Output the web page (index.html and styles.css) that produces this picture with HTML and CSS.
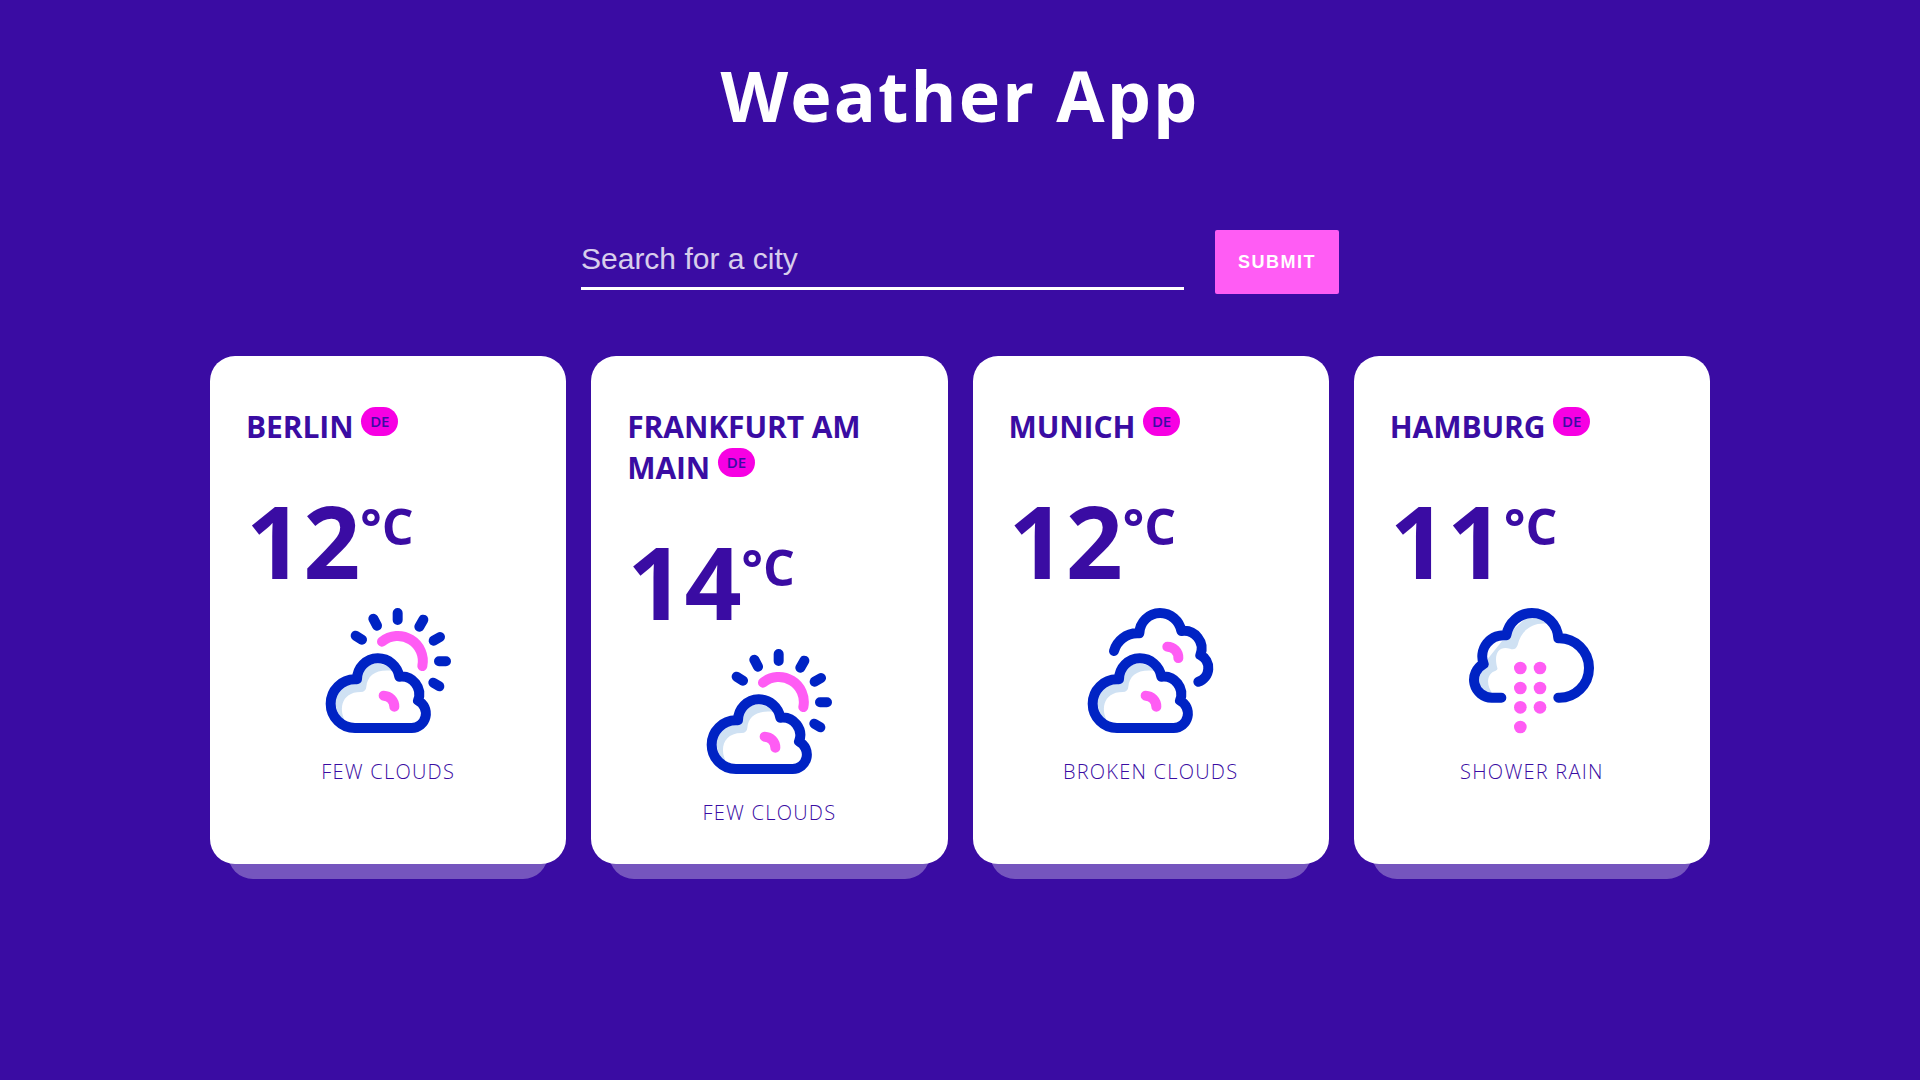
FILE: index.html
```html
<!DOCTYPE html>
<html lang="en">
<head>
<meta charset="utf-8">
<title>Weather App</title>
<link rel="stylesheet" href="styles.css">
</head>
<body>
<svg class="defs" width="0" height="0" aria-hidden="true">
  <symbol id="cloud" viewBox="48 54 375 375" overflow="visible">
    <path class="shade" d="M110 400C85 365 90 306 152 306Q168 305 169 290C172 255 200 236 250 243A64 64 0 0 0 140 268L135 268A73 73 0 0 0 110 400Z"/>
    <path class="line" d="M135 414A73 73 0 0 1 135 268L141 268A63 63 0 0 1 203 205A65 65 0 0 1 268 260A53 53 0 0 1 324 332A43.4 43.4 0 0 1 305 414Z"/>
    <path class="accent" d="M221 317A33 33 0 0 1 253 350"/>
  </symbol>
</svg>
<header class="banner">
  <h1 class="heading">Weather App</h1>
  <form class="search">
    <input class="search-input" type="text" placeholder="Search for a city">
    <button class="search-button" type="button">SUBMIT</button>
  </form>
</header>
<main class="cities">
  <section class="city">
    <h2 class="city-name">Berlin <sup class="country">DE</sup></h2>
    <div class="city-temp">12<sup class="unit">°C</sup></div>
    <figure class="weather">
      <svg class="icon" viewBox="48 54 375 375">
        <path class="accent" d="M216 155A75 75 0 0 1 337 228"/>
        <path class="line" d="M263 69V90M190 86L201 107M340 89L328 110M137 137L156 149M390 141L371 152M387 214H408M370 278L388 289"/>
        <use href="#cloud" x="48" y="54" width="375" height="375"/>
      </svg>
      <figcaption class="caption">few clouds</figcaption>
    </figure>
  </section>
  <section class="city">
    <h2 class="city-name">Frankfurt am Main <sup class="country">DE</sup></h2>
    <div class="city-temp">14<sup class="unit">°C</sup></div>
    <figure class="weather">
      <svg class="icon" viewBox="48 54 375 375">
        <path class="accent" d="M216 155A75 75 0 0 1 337 228"/>
        <path class="line" d="M263 69V90M190 86L201 107M340 89L328 110M137 137L156 149M390 141L371 152M387 214H408M370 278L388 289"/>
        <use href="#cloud" x="48" y="54" width="375" height="375"/>
      </svg>
      <figcaption class="caption">few clouds</figcaption>
    </figure>
  </section>
  <section class="city">
    <h2 class="city-name">Munich <sup class="country">DE</sup></h2>
    <div class="city-temp">12<sup class="unit">°C</sup></div>
    <figure class="weather">
      <svg class="icon" viewBox="54 54 375 375">
        <path class="line" d="M132 183A72 72 0 0 1 202 130L208 130A63 63 0 0 1 270 69A65 65 0 0 1 334 123A53 53 0 0 1 391 195A43.4 43.4 0 0 1 385 275"/>
        <path class="accent" d="M292 170A33 33 0 0 1 325 204"/>
        <use href="#cloud" x="54" y="54" width="375" height="375"/>
      </svg>
      <figcaption class="caption">broken clouds</figcaption>
    </figure>
  </section>
  <section class="city">
    <h2 class="city-name">Hamburg <sup class="country">DE</sup></h2>
    <div class="city-temp">11<sup class="unit">°C</sup></div>
    <figure class="weather">
      <svg class="icon" viewBox="57 54 375 375">
        <path class="shade" d="M130 314C106 285 110 250 137 242Q144 240 142 234C130 192 146 166 180 176Q197 182 203 165C213 122 246 97 290 101L246 69L170 136L101 222L80 290Z"/>
        <path class="line" d="M154 323H125A53.5 53.5 0 0 1 101 222A64 64 0 0 1 169 136A79 79 0 0 1 246 69A79 79 0 0 1 325 145A89 89 0 0 1 417 234A89 89 0 0 1 325 323"/>
        <g class="drops">
          <circle cx="211" cy="234" r="19"/><circle cx="270" cy="234" r="19"/>
          <circle cx="211" cy="294" r="19"/><circle cx="270" cy="294" r="19"/>
          <circle cx="211" cy="352" r="19"/><circle cx="270" cy="352" r="19"/>
          <circle cx="211" cy="411" r="19"/>
        </g>
      </svg>
      <figcaption class="caption">shower rain</figcaption>
    </figure>
  </section>
</main>
</body>
</html>
```
FILE: styles.css
```css
* {
  box-sizing: border-box;
  margin: 0;
  padding: 0;
}

body {
  min-height: 100vh;
  padding-top: 48px;
  background: #3a0ca3;
  color: #fff;
  font-family: "Open Sans", sans-serif;
}

.defs {
  display: block;
}

.banner {
  display: flex;
  flex-direction: column;
  align-items: center;
}

.heading {
  font-size: 70px;
  font-weight: 700;
  line-height: 95px;
  letter-spacing: 0.03em;
}

.search {
  display: flex;
  align-items: flex-start;
  gap: 31px;
  margin-top: 87px;
}

.search-input {
  width: 603px;
  height: 60px;
  border: 0;
  border-bottom: 3px solid #fff;
  background: none;
  color: #fff;
  font: 30px "Liberation Sans", sans-serif;
}

.search-input::placeholder {
  color: #fff;
  opacity: 0.8;
}

.search-button {
  width: 124px;
  height: 64px;
  border: 0;
  border-radius: 2px;
  background: #ff5cf4;
  color: #fff;
  font: bold 18px "Liberation Sans", sans-serif;
  letter-spacing: 1.5px;
}

.cities {
  display: grid;
  grid-template-columns: repeat(4, 1fr);
  gap: 25px;
  width: 1500px;
  margin: 62px auto 0;
  position: relative;
  z-index: 0;
}

.city {
  position: relative;
  height: 508px;
  padding: 50px 36px 38px;
  border-radius: 25px;
  background: #fff;
  color: #3a0ca3;
}

.city::after {
  content: "";
  position: absolute;
  z-index: -1;
  bottom: -15px;
  left: 5%;
  width: 90%;
  height: 50px;
  border-radius: 25px;
  background: #fff;
  opacity: 0.3;
}

.city-name {
  font-size: 30px;
  font-weight: 700;
  line-height: 41px;
  letter-spacing: -0.1px;
  text-transform: uppercase;
}

.country {
  display: inline-block;
  padding: 4px 9px;
  border-radius: 15px;
  background: #f700e3;
  font-size: 15px;
  font-weight: 600;
  line-height: 21px;
  vertical-align: 11px;
}

.city-temp {
  margin-top: 25px;
  font-size: 100px;
  font-weight: 700;
  line-height: 136px;
}

.unit {
  font-size: 50px;
  font-weight: 700;
  line-height: 1;
  vertical-align: 34px;
}

.weather {
  display: flex;
  flex-direction: column;
  align-items: center;
}

.icon {
  width: 125px;
  height: 125px;
  overflow: visible;
}

.line,
.accent {
  fill: none;
  stroke: #0023c4;
  stroke-width: 30;
  stroke-linecap: round;
  stroke-linejoin: round;
}

.accent {
  stroke: #ff5cf4;
}

.shade {
  fill: #cfe1f3;
}

.drops {
  fill: #ff5cf4;
}

.caption {
  margin-top: 25px;
  font-size: 20px;
  font-weight: 300;
  line-height: 27px;
  letter-spacing: 0.062em;
  text-transform: uppercase;
}
```
